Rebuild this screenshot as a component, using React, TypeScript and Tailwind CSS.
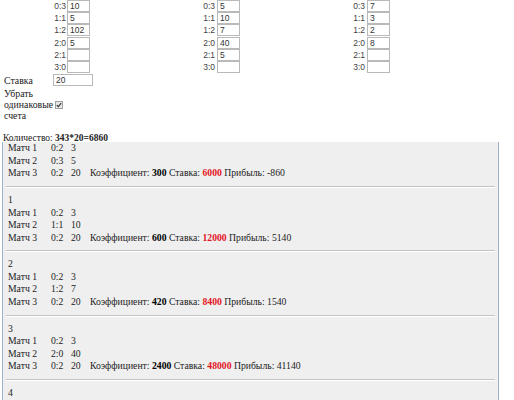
import { Fragment } from "react";

const serif = "font-['Liberation_Serif','Times_New_Roman',serif]";
const sans = "font-['Liberation_Sans',Arial,sans-serif]";

const labels = ["0:3", "1:1", "1:2", "2:0", "2:1", "3:0"];

// values per match column, in the same order as labels
const columns = [
  ["10", "5", "102", "5", "", ""],
  ["5", "10", "7", "40", "5", ""],
  ["7", "3", "2", "8", "", ""],
];

const results = [
  { n: "", rows: [["0:2", "3"], ["0:3", "5"], ["0:2", "20"]], k: 300, stake: 6000, profit: -860 },
  { n: "1", rows: [["0:2", "3"], ["1:1", "10"], ["0:2", "20"]], k: 600, stake: 12000, profit: 5140 },
  { n: "2", rows: [["0:2", "3"], ["1:2", "7"], ["0:2", "20"]], k: 420, stake: 8400, profit: 1540 },
  { n: "3", rows: [["0:2", "3"], ["2:0", "40"], ["0:2", "20"]], k: 2400, stake: 48000, profit: 41140 },
  { n: "4", rows: [["0:2", "3"], ["2:1", "5"], ["0:2", "20"]], k: 300, stake: 6000, profit: -860 },
];

function ScoreInput({ value }: { value: string }) {
  return (
    <div
      className={`w-[23px] h-[12px] border border-[#b9b9b9] bg-white pl-[2px] text-[8.5px] leading-[10px] text-[#333] ${sans}`}
    >
      {value}
    </div>
  );
}

export default function App() {
  return (
    <div className={`h-[400px] overflow-hidden bg-white text-[#222] ${serif}`}>
      {/* score inputs */}
      <div className="flex flex-col">
        {labels.map((label, i) => (
          <div key={label} className="flex h-[12.2px] items-start">
            {columns.map((col, c) => (
              <div
                key={c}
                className={`flex items-start ${c === 0 ? "ml-[52px] w-[149px]" : "w-[150px]"}`}
              >
                <span
                  className={`w-[14px] text-right text-[8.5px] leading-[12px] text-[#444] ${sans}`}
                >
                  {label}
                </span>
                <span className={c === 0 ? "ml-[1px]" : "ml-[2px]"}>
                  <ScoreInput value={col[i]} />
                </span>
              </div>
            ))}
          </div>
        ))}
      </div>

      {/* stake + options */}
      <div className="mt-[1px] flex items-center text-[9.8px] leading-[11px]">
        <span className="w-[53px] pl-[4px]">Ставка</span>
        <div
          className={`w-[40px] h-[12px] border border-[#b9b9b9] bg-white pl-[2px] text-[8.5px] leading-[10px] text-[#333] ${sans}`}
        >
          20
        </div>
      </div>
      <div className="mt-[2px] flex items-center text-[9.8px] leading-[11px]">
        <span className="w-[52px] pl-[4px]">
          Убрать
          <br />
          одинаковые
          <br />
          счета
        </span>
        <span className="ml-[3px] mt-[1px] flex h-[8px] w-[8px] items-center justify-center border border-[#a0a0a0] bg-[#e8e8e8]">
          <svg width="6" height="6" viewBox="0 0 6 6">
            <path d="M0.8 3.2 L2.3 4.7 L5.2 1.2" fill="none" stroke="#333" strokeWidth="1.1" />
          </svg>
        </span>
      </div>

      <div className="mt-[12px] pl-[3px] text-[9.5px] leading-[11px]">
        Количество: <b>343*20=6860</b>
      </div>

      {/* result list */}
      <div className="mt-[1px] ml-[2px] w-[497px] border-l border-r border-[#9fb3cc] bg-[#efefef] text-[9.7px] leading-[12.6px]">
        {results.map((r, i) => (
          <Fragment key={i}>
            {i > 0 && (
              <div className="mx-[3px] my-[6px] border-t border-[#c4c4c4] border-b-white border-b" />
            )}
            <div className={i === 0 ? "-mt-[3px] pl-[5px]" : "pl-[5px]"}>
              {r.n && <div>{r.n}</div>}
              {r.rows.map(([score, odd], j) => (
                <div key={j} className="flex">
                  <span className="w-[43px]">Матч {j + 1}</span>
                  <span className="w-[20px]">{score}</span>
                  <span className="w-[19px]">{odd}</span>
                  {j === 2 && (
                    <span>
                      Коэффициент: <b className="text-black">{r.k}</b> Ставка:{" "}
                      <b className="text-[#e3141e]">{r.stake}</b> Прибыль: {r.profit}
                    </span>
                  )}
                </div>
              ))}
            </div>
          </Fragment>
        ))}
      </div>
    </div>
  );
}
